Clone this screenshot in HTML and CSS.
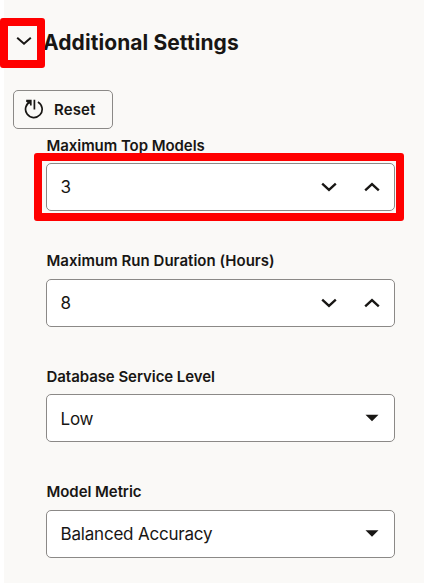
FILE: index.html
```html
<!DOCTYPE html>
<html lang="en">
<head>
<meta charset="utf-8">
<title>Additional Settings</title>
<link rel="stylesheet" href="styles.css">
</head>
<body>
<main class="panel">
  <header class="header">
    <div class="toggle">
      <svg width="16" height="10" viewBox="0 0 16 10"><path d="M1.2 1.8 8 7.7 14.8 1.8"/></svg>
      <span class="highlight highlight-toggle"></span>
    </div>
    <h1 class="title">Additional Settings</h1>
  </header>
  <button class="reset" type="button">
    <svg width="20" height="20" viewBox="0 0 20 20"><path d="M13.9 3A8.3 8.3 0 1 1 6.6 2.6M2.2 1.5h4.6v5M10.4.8v9.6M2.4 2l3.8 2"/></svg>
    <span class="reset-text">Reset</span>
  </button>
  <section class="fields">
    <div class="group">
      <div class="label label-models">Maximum Top Models</div>
      <div class="field">
        <span class="value">3</span>
        <svg class="step" width="16" height="10" viewBox="0 0 16 10"><path d="M1.2 1.7 8 7.8 14.8 1.7"/></svg>
        <svg class="step" width="16" height="10" viewBox="0 0 16 10"><path d="M1.2 8.3 8 2.2 14.8 8.3"/></svg>
        <span class="highlight highlight-field"></span>
      </div>
    </div>
    <div class="group">
      <div class="label label-duration">Maximum Run Duration (Hours)</div>
      <div class="field">
        <span class="value">8</span>
        <svg class="step" width="16" height="10" viewBox="0 0 16 10"><path d="M1.2 1.7 8 7.8 14.8 1.7"/></svg>
        <svg class="step" width="16" height="10" viewBox="0 0 16 10"><path d="M1.2 8.3 8 2.2 14.8 8.3"/></svg>
      </div>
    </div>
    <div class="group">
      <div class="label label-level">Database Service Level</div>
      <div class="field">
        <span class="value value-low">Low</span>
        <svg class="caret" width="14" height="8" viewBox="0 0 14 8"><path d="M.5.8h13L7 7.3z"/></svg>
      </div>
    </div>
    <div class="group">
      <div class="label label-metric">Model Metric</div>
      <div class="field">
        <span class="value">Balanced Accuracy</span>
        <svg class="caret" width="14" height="8" viewBox="0 0 14 8"><path d="M.5.3h13L7 6.8z"/></svg>
      </div>
    </div>
  </section>
</main>
</body>
</html>
```
FILE: styles.css
```css
* { box-sizing: border-box; }
body {
  margin: 0;
  background: #fff;
  color: #181614;
  font-family: Inter, "Liberation Sans", sans-serif;
}
.panel {
  height: 583px;
  margin-left: 4px;
  padding: 26px 29px 0 9px;
  background: #faf9f7;
}
svg {
  display: block;
  flex: none;
  fill: none;
  stroke: #181614;
  stroke-width: 2;
}
.header {
  display: flex;
  align-items: center;
  height: 34px;
}
.toggle {
  position: relative;
  display: flex;
  align-items: center;
  justify-content: center;
  width: 21px;
  height: 34px;
  padding-bottom: 4px;
}
.title {
  margin: 0 0 0 9px;
  font-size: 21px;
  line-height: 28px;
  font-weight: 700;
  letter-spacing: 0.08px;
  white-space: nowrap;
}
.highlight {
  position: absolute;
  border: 8px solid #f00;
  border-radius: 3px;
}
.highlight-toggle {
  left: -13px;
  top: -8px;
  width: 44.5px;
  height: 50px;
}
.highlight-field {
  inset: -11px -10px -11px -13px;
}
.reset {
  display: flex;
  align-items: center;
  gap: 10px;
  width: 100px;
  height: 39px;
  margin-top: 30px;
  padding: 0 0 0 10px;
  border: 1px solid #8b8987;
  border-radius: 5px;
  background: transparent;
  color: inherit;
  font: 600 15px/20px Inter, sans-serif;
}
.reset svg {
  margin-bottom: 2px;
  stroke-width: 1.7;
}
.reset-text { letter-spacing: 0.1px; }
.fields {
  width: 349px;
  margin: 8px 0 0 33px;
}
.group { margin-bottom: 42px; }
.group:nth-child(2) { margin-bottom: 41px; }
.label {
  height: 18px;
  margin-bottom: 8px;
  padding-left: 0.5px;
  font-size: 15px;
  line-height: 18px;
  font-weight: 600;
  letter-spacing: -0.06px;
  white-space: nowrap;
}
.label-duration { letter-spacing: 0.02px; }
.label-duration,
.label-metric { line-height: 16px; }
.field {
  position: relative;
  display: flex;
  align-items: center;
  height: 48px;
  padding: 0 14.5px 0 13.5px;
  border: 1px solid #8b8987;
  border-radius: 5px;
  background: #fff;
}
.value {
  flex: 1;
  font-size: 17px;
  line-height: 24px;
  letter-spacing: -0.2px;
}
.value-low { padding-top: 2px; }
.step { stroke-width: 2.4; }
.step + .step { margin-left: 27px; }
.caret {
  margin-right: 1px;
  fill: #181614;
  stroke: none;
}
```
